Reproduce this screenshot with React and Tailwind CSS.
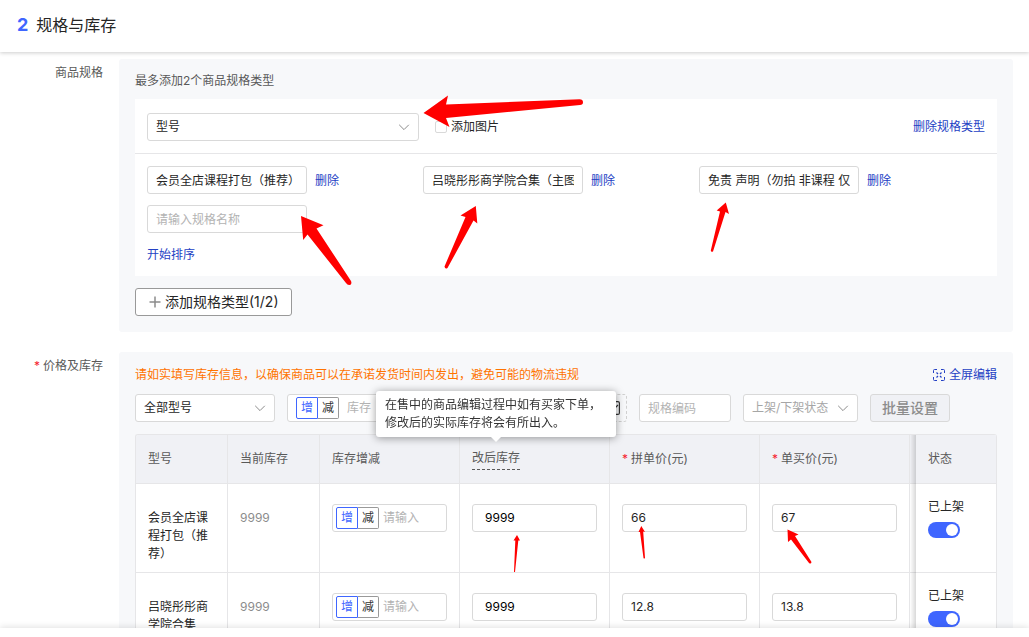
import React from "react";

const rows = [
  { name: "会员全店课程打包（推荐）", stock: "9999", after: "9999", group: "66", single: "67" },
  { name: "吕晓彤彤商学院合集", stock: "9999", after: "9999", group: "12.8", single: "13.8" },
];

const specs = ["会员全店课程打包（推荐）", "吕晓彤彤商学院合集（主图", "免责 声明（勿拍 非课程 仅"];

const control = "h-7 rounded-[3px] border border-[#d9d9d9] bg-white";
const filled = "pb-0.5 outline-none " + control;
const link = "text-[#2441c4]";

function Chevron() {
  return (
    <svg className="pointer-events-none absolute top-2 right-[9px] h-3 w-3" viewBox="0 0 12 12" fill="none" stroke="#8c8c8c">
      <path d="M1.2 3.8 6 8.6l4.8-4.8" />
    </svg>
  );
}

function Select({ label, options, className, textClass }) {
  return (
    <div className={"relative shrink-0 " + className}>
      <select aria-label={label} className={"block w-full appearance-none pr-6 pl-2 outline-none " + control + " " + textClass}>
        {options.map((o) => (
          <option key={o}>{o}</option>
        ))}
      </select>
      <Chevron />
    </div>
  );
}

function StockStepper({ placeholder, className }) {
  return (
    <div className={"flex items-center " + control + " " + className}>
      <button type="button" className="h-[22px] w-[22px] shrink-0 rounded-l-[2px] border border-[#3f66ff] text-[#3f66ff]">
        增
      </button>
      <button type="button" className="h-[22px] w-[21px] shrink-0 rounded-r-[2px] border border-l-0 border-[#999] text-[#333]">
        减
      </button>
      <input
        aria-label={"增减" + placeholder}
        placeholder={placeholder}
        className="ml-1 w-full min-w-0 outline-none placeholder:text-[#b3b3b3]"
      />
    </div>
  );
}

function Switch({ label }) {
  return (
    <label className="relative mt-1.5 block h-4 w-8 cursor-pointer">
      <input type="checkbox" role="switch" defaultChecked aria-label={label} className="peer absolute h-4 w-8 appearance-none rounded-full bg-[#c4c7cf] checked:bg-[#3f66ff]" />
      <span className="pointer-events-none absolute top-0.5 left-0.5 h-3 w-3 rounded-full bg-white peer-checked:left-[18px]" />
    </label>
  );
}

function Required() {
  return <span className="mr-[3px] text-[#f5222d]">*</span>;
}

function FieldRow({ label, required, children }) {
  return (
    <section className="flex items-start gap-4 pr-4">
      <h2 className="w-[103px] shrink-0 pt-[5px] text-right leading-[18px] text-[#595959]">
        {required && <Required />}
        {label}
      </h2>
      <div className="min-w-0 flex-1 rounded-[3px] bg-[#f7f8fa] p-4">{children}</div>
    </section>
  );
}

function Th({ children, className = "" }) {
  return (
    <th className={"h-[49px] border-r border-b border-[#e6e6e8] bg-[#f0f1f5] px-3 text-left font-normal whitespace-nowrap text-[#595959] " + className}>
      {children}
    </th>
  );
}

const td = "border-r border-b border-[#e6e6e8] bg-white px-3 align-top ";
const sticky =
  "sticky right-0 before:absolute before:top-0 before:-bottom-px before:right-full before:w-1.5 before:bg-linear-to-l before:from-black/15 before:to-transparent ";

function Annotations() {
  return (
    <svg className="pointer-events-none absolute top-0 left-0" width="1029" height="637" viewBox="0 0 1029 637" fill="#ff0000" aria-hidden="true">
      <path d="M423.500 113 448 95.500 446 104.500 579.500 99.300Q583 99.500 583 102.300 583 105 580 105L446 118 449.500 127Z" />
      <path d="M301 216 323.500 225.300 316.500 228.500 351 281Q352.300 284.500 349.500 285 347.500 285.300 346 283L307.500 234.500 303.200 240Z" />
      <path d="M475.800 206 477.300 223.500 473.500 220.500 447.500 268Q445 269.500 444.500 266.500L465.500 217 460.500 215.600Z" />
      <path d="M725.800 202.500 729 214 725.500 212 713 251.500Q711 252.500 710.800 250.500L720 211.500 716.700 210.500Z" />
      <path d="M517 535 520 540.500 518.300 540.500 515 572H514L515.300 540.500 513.500 540.500Z" />
      <path d="M641.300 526 645 532 643.200 531.500 645 558Q644.200 559 643.500 558L640 532 638.500 532Z" />
      <path d="M787.500 529.500 798.500 534.500 795 536 811.500 562Q811 564.500 809 563L791 539.500 788 542Z" />
    </svg>
  );
}

export default function App() {
  return (
    <div className="relative flex h-screen flex-col overflow-hidden bg-white font-[Inter,'Noto_Sans_CJK_SC',sans-serif] text-xs text-[#262626]">
      <header className="relative z-10 flex h-[52px] shrink-0 items-center gap-2 bg-white px-[17px] pb-0.5 text-base shadow-[0_1px_4px_rgba(0,0,0,0.2)]">
        <span className="text-lg font-bold text-[#3f66ff]">2</span>
        <h1>规格与库存</h1>
      </header>

      <main className="flex min-h-0 flex-1 flex-col gap-5 overflow-y-auto pt-[7px] [scrollbar-width:none]">
        <FieldRow label="商品规格">
          <p className="pb-3 leading-3 text-[#595959]">最多添加2个商品规格类型</p>
          <div className="bg-white">
            <div className="flex items-center border-b border-[#e6e6e8] px-3 pt-3.5 pb-3">
              <Select label="规格类型" options={["型号"]} className="w-[272px]" textClass="" />
              <label className="ml-4 flex items-center gap-1">
                <input type="checkbox" className="h-3 w-3 appearance-none rounded-[2px] border border-[#d9d9d9] bg-white checked:bg-[#3f66ff]" />
                添加图片
              </label>
              <button type="button" className={"ml-auto " + link}>删除规格类型</button>
            </div>
            <div className="px-3 pt-3 pb-3">
              <div className="flex flex-wrap gap-y-[11px]">
                {specs.map((s) => (
                  <div key={s} className="flex w-[276px] items-center gap-2">
                    <input aria-label="规格名称" defaultValue={s} className={"w-40 px-2 " + filled} />
                    <button type="button" className={"pt-0.5 " + link}>删除</button>
                  </div>
                ))}
                <input aria-label="规格名称" placeholder="请输入规格名称" className={"w-40 px-2 outline-none placeholder:text-[#b3b3b3] " + control} />
              </div>
              <button type="button" className={"mt-[13px] block leading-[18px] " + link}>开始排序</button>
            </div>
          </div>
          <button type="button" className="mt-3 flex h-7 items-center gap-[3px] rounded-[3px] border border-[#999] bg-white px-3 text-sm">
            <svg className="h-3.5 w-3.5" viewBox="0 0 14 14" stroke="#8c8c8c" strokeWidth="1.500">
              <path d="M7 1.500v11M1.500 7h11" />
            </svg>
            添加规格类型(1/2)
          </button>
        </FieldRow>

        <FieldRow label="价格及库存" required>
          <div className="flex justify-between pb-3 leading-[14px]">
            <p className="text-[#ff7300]">请如实填写库存信息，以确保商品可以在承诺发货时间内发出，避免可能的物流违规</p>
            <button type="button" className={"flex items-center gap-1 " + link}>
              <svg className="h-3 w-3" viewBox="0 0 12 12" fill="none" stroke="#2441c4">
                <path d="M.5 4V1.500a1 1 0 0 1 1-1H4M8 .5h2.500a1 1 0 0 1 1 1V4M11.500 8v2.500a1 1 0 0 1-1 1H8M4 11.500H1.500a1 1 0 0 1-1-1V8" />
                <path d="M3.500 3.500 5 5M8.500 3.500 7 5M8.500 8.500 7 7M3.500 8.500 5 7" strokeWidth="1.200" />
              </svg>
              全屏编辑
            </button>
          </div>
          <div className="flex items-center gap-3">
            <Select label="型号" options={["全部型号"]} className="w-[140px]" textClass="" />
            <StockStepper placeholder="库存" className="w-[140px] shrink-0 px-2 [&>input]:ml-2" />
            <div className="flex h-7 w-[188px] shrink-0 items-center justify-end rounded-[3px] border border-dashed border-[#d0d0d0] pr-1.5">
              <svg className="h-3.5 w-3.5" viewBox="0 0 14 14" fill="none" stroke="#333" strokeWidth="1.200">
                <rect x="0.600" y="0.600" width="12.800" height="12.800" rx="1.500" />
                <path d="M3 7.500 6 10l6-6" />
              </svg>
            </div>
            <input aria-label="规格编码" placeholder="规格编码" className={"w-[92px] px-2 outline-none placeholder:text-[#b3b3b3] " + control} />
            <Select label="上架/下架状态" options={["上架/下架状态"]} className="w-[115px]" textClass="text-[#a6a6a6]" />
            <button type="button" disabled className="h-7 rounded-[3px] border border-[#d9d9d9] bg-[#f0f1f5] px-[11px] text-sm font-medium text-[#8c8c8c]">
              批量设置
            </button>
          </div>

          <div className="relative mt-3">
            <div role="tooltip" className="absolute bottom-full left-[241px] z-20 -mb-[3px] w-60 rounded-[3px] bg-white py-[5px] pl-[9px] leading-[18px] text-[#333] shadow-[0_1px_8px_rgba(0,0,0,0.4)]">
              在售中的商品编辑过程中如有买家下单，
              <br />
              修改后的实际库存将会有所出入。
              <span className="absolute top-full left-1/2 h-0 w-0 -translate-x-1/2 border-x-[5px] border-t-[5px] border-x-transparent border-t-white" />
            </div>
            <div className="overflow-x-auto rounded-t-[3px] border-t border-l border-[#e6e6e8] [scrollbar-width:none]">
              <table className="w-[1005px] min-w-full table-fixed border-separate border-spacing-0">
                <colgroup>
                  <col className="w-[92px]" />
                  <col className="w-[92px]" />
                  <col className="w-[140px]" />
                  <col className="w-[150px]" />
                  <col className="w-[150px]" />
                  <col className="w-[150px]" />
                  <col className="w-[150px]" />
                  <col className="w-[81px]" />
                </colgroup>
                <thead>
                  <tr>
                    <Th>型号</Th>
                    <Th>当前库存</Th>
                    <Th>库存增减</Th>
                    <Th><span className="inline-block border-b border-dashed border-[#595959] pb-0.5 leading-[18px]">改后库存</span></Th>
                    <Th><Required />拼单价(元)</Th>
                    <Th><Required />单买价(元)</Th>
                    <Th />
                    <Th className={sticky}>状态</Th>
                  </tr>
                </thead>
                <tbody>
                  {rows.map((r) => (
                    <tr key={r.name}>
                      <td className={td + "pt-[25px] pb-[9px] leading-[18px]"}>{r.name}</td>
                      <td className={td + "pt-[25px] leading-[18px] text-[#8c8c8c]"}>{r.stock}</td>
                      <td className={td + "pt-5"}><StockStepper placeholder="请输入" className="px-[3px]" /></td>
                      <td className={td + "pt-5"}><input aria-label="改后库存" defaultValue={r.after} className={"w-full px-3 text-black " + filled} /></td>
                      <td className={td + "pt-5"}><input aria-label="拼单价" defaultValue={r.group} className={"w-full px-2 " + filled} /></td>
                      <td className={td + "pt-5"}><input aria-label="单买价" defaultValue={r.single} className={"w-full px-2 " + filled} /></td>
                      <td className={td} />
                      <td className={td + sticky + "pt-3.5 leading-[18px]"}>
                        已上架
                        <Switch label={r.name + "上架"} />
                      </td>
                    </tr>
                  ))}
                </tbody>
              </table>
            </div>
          </div>
        </FieldRow>
      </main>

      <footer className="relative z-10 h-[9px] shrink-0 bg-white shadow-[0_-1px_6px_rgba(0,0,0,0.12)]" />
      <div className="absolute top-0 left-0 z-30">
        <Annotations />
      </div>
    </div>
  );
}
